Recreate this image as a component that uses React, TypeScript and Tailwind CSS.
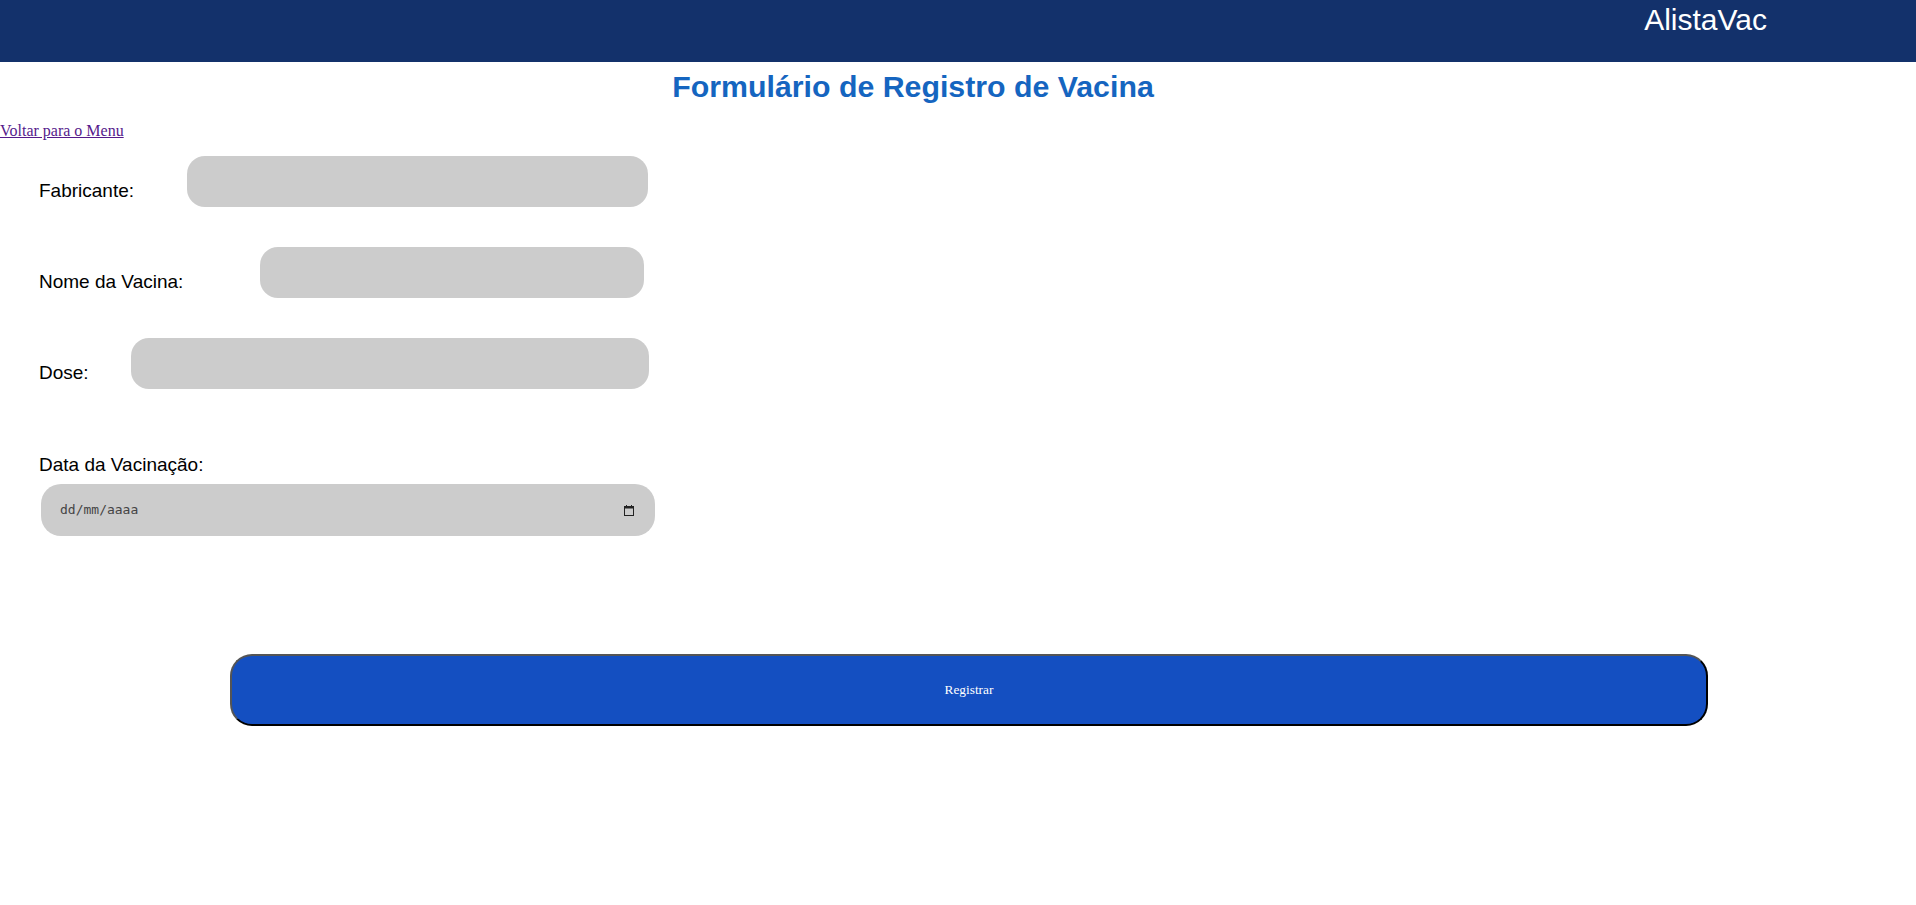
import { useState } from 'react';

const sans = "font-['Liberation_Sans',Arial,sans-serif]";
const serif = "font-['Liberation_Serif','Times_New_Roman',serif]";

interface Field {
  key: string;
  label: string;
  labelWidth: string;
  inputClass: string;
}

const fields: Field[] = [
  { key: 'fabricante', label: 'Fabricante:', labelWidth: 'w-[148px]', inputClass: 'w-[461px]' },
  { key: 'nome', label: 'Nome da Vacina:', labelWidth: 'w-[221px]', inputClass: 'w-[384px]' },
  { key: 'dose', label: 'Dose:', labelWidth: 'w-[92px]', inputClass: 'w-[518px]' },
];

export default function App() {
  const [values, setValues] = useState<Record<string, string>>({ fabricante: '', nome: '', dose: '', data: '' });

  return (
    <div className="min-h-screen bg-white">
      {/* Header */}
      <header className="h-[62px] bg-[#13316b] flex justify-end pr-[149px]">
        <span className={`${sans} text-white text-[30px] leading-[34px] pt-[3px]`}>AlistaVac</span>
      </header>

      <div className="w-[1826px] text-center mt-[8px]">
        <h1 className={`${sans} text-[#1565c0] text-[30.3px] leading-[34px] font-bold`}>Formulário de Registro de Vacina</h1>
      </div>

      <div className={`${serif} text-[16px] leading-[18px] mt-[18px]`}>
        <a href="#" className="text-[#551a8b] underline">Voltar para o Menu</a>
      </div>

      <form className="pl-[39px] mt-[16px]" onSubmit={(e) => e.preventDefault()}>
        {fields.map((f, i) => (
          <div key={f.key} className={`flex items-end ${i > 0 ? 'mt-[40px]' : ''}`}>
            <label className={`${sans} ${f.labelWidth} text-[19px] leading-[22px] text-black mb-[5px] shrink-0`}>{f.label}</label>
            <input
              value={values[f.key]}
              onChange={(e) => setValues((prev) => ({ ...prev, [f.key]: e.target.value }))}
              className={`${f.inputClass} h-[51px] bg-[#cccccc] rounded-[18px] px-4 outline-none`}
            />
          </div>
        ))}

        <label className={`${sans} block text-[19px] leading-[22px] text-black mt-[65px]`}>Data da Vacinação:</label>
        <div className="ml-[2px] mt-[8px] w-[614px] h-[52px] bg-[#cccccc] rounded-[20px] flex items-center pl-[19px] pr-[21px]">
          <input
            value={values.data}
            onChange={(e) => setValues((prev) => ({ ...prev, data: e.target.value }))}
            placeholder="dd/mm/aaaa"
            className="flex-1 bg-transparent outline-none font-['DejaVu_Sans_Mono',monospace] text-[13px] text-[#333] placeholder:text-[#444]"
          />
          <svg width="10" height="11" viewBox="0 0 10 11" className="shrink-0">
            <rect x="0.5" y="1.5" width="9" height="9" fill="none" stroke="#222" strokeWidth="1" />
            <rect x="0.5" y="1.5" width="9" height="2" fill="#222" />
            <rect x="2" y="0" width="1" height="2" fill="#222" />
            <rect x="7" y="0" width="1" height="2" fill="#222" />
          </svg>
        </div>

        <button
          type="submit"
          className={`${serif} ml-[191px] mt-[118px] w-[1478px] h-[72px] bg-[#144fc1] text-white text-[13.33px] rounded-[22px] border-2 border-solid border-t-[#555] border-l-[#555] border-b-black border-r-black`}
        >
          Registrar
        </button>
      </form>
    </div>
  );
}
